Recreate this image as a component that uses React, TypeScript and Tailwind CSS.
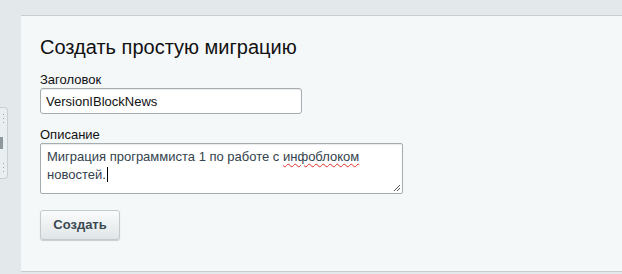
export default function App() {
  return (
    <div
      className="relative h-[274px] w-[622px] overflow-hidden bg-[#e3e9eb] pt-[15px] pl-[21px]"
      style={{ fontFamily: '"Liberation Sans", Arial, sans-serif' }}
    >
      {/* ручка слева */}
      <div className="absolute left-0 top-[107px] flex h-[72px] w-[8px] flex-col items-start justify-between rounded-r-[4px] border border-l-0 border-[#c9d0d3] bg-[#e9eef0] py-[6px]">
        <div className="flex flex-col gap-[3px] pl-[3px]">
          <span className="h-[1px] w-[1px] bg-[#9aa3a7]" />
          <span className="h-[1px] w-[1px] bg-[#9aa3a7]" />
          <span className="h-[1px] w-[1px] bg-[#9aa3a7]" />
        </div>
        <span className="h-[12px] w-[3px] bg-[#8e979b]" />
        <div className="flex flex-col gap-[3px] pl-[3px]">
          <span className="h-[1px] w-[1px] bg-[#9aa3a7]" />
          <span className="h-[1px] w-[1px] bg-[#9aa3a7]" />
          <span className="h-[1px] w-[1px] bg-[#9aa3a7]" />
        </div>
      </div>

      {/* панель */}
      <div className="h-[257px] border-t border-b border-[#c6cdd0] bg-[#f5f8f9] pl-[19px] pt-[19px]">
        <h1 className="text-[20px] leading-[24px] text-[#111]">Создать простую миграцию</h1>

        <div className="mt-[13px]">
          <div className="text-[13px] leading-[15px] text-[#111]">Заголовок</div>
          <input
            defaultValue="VersionIBlockNews"
            className="mt-[1px] block h-[26px] w-[262px] rounded-[3px] border border-[#a6adb0] bg-white px-[5px] text-[13px] text-[#111] shadow-[inset_0_1px_1px_rgba(0,0,0,0.08)] outline-none"
            style={{ fontFamily: '"Liberation Sans", Arial, sans-serif' }}
          />
        </div>

        <div className="mt-[13px]">
          <div className="text-[13px] leading-[15px] text-[#111]">Описание</div>
          <div className="relative mt-[1px] h-[51px] w-[363px] rounded-[2px] border border-[#a6adb0] bg-white px-[6px] pt-[5px] text-[13px] leading-[15px] text-[#33424c] shadow-[inset_0_1px_1px_rgba(0,0,0,0.08)]">
            Миграция программиста 1 по работе с{' '}
            <span className="underline decoration-[#e0302a] decoration-wavy decoration-1 underline-offset-2">
              инфоблоком
            </span>{' '}
            новостей.
            <span className="ml-[1px] inline-block h-[15px] w-[1px] translate-y-[3px] bg-black" />
            <svg className="absolute right-[1px] bottom-[1px]" width="9" height="9" viewBox="0 0 9 9">
              <path d="M8 2L2 8M8 5L5 8" stroke="#555" strokeWidth="1" />
            </svg>
          </div>
        </div>

        <button className="mt-[16px] flex h-[30px] w-[80px] items-center justify-center rounded-[3px] border border-[#c3cacd] bg-gradient-to-b from-[#fbfcfc] to-[#dfe5e7] text-[13px] font-bold text-[#3b4852] shadow-[0_1px_1px_rgba(0,0,0,0.18)]">
          Создать
        </button>
      </div>
    </div>
  );
}
